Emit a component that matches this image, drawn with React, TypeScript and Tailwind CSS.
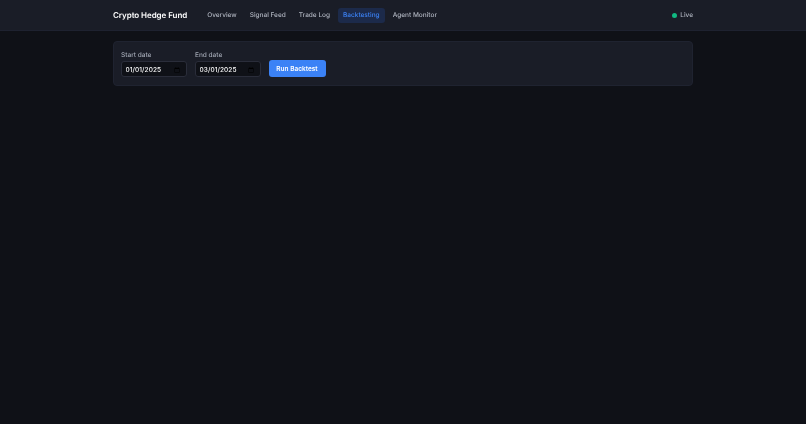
export default function App() {
  const links = ["Overview", "Signal Feed", "Trade Log", "Backtesting", "Agent Monitor"];
  return (
    <div className="min-h-[424px] bg-[#0f1117] font-['Inter',sans-serif] [text-rendering:geometricPrecision] [filter:blur(0.3px)]">
      <header className="h-[31px] bg-[#1a1d27] border-b border-[#1e2230]">
        <div className="mx-auto flex h-full w-[580px] items-center justify-between">
          <div className="flex items-center gap-[15px]">
            <span className="text-[8px] tracking-[-0.06px] font-semibold text-white">Crypto Hedge Fund</span>
            <nav className="flex items-center gap-[3px]">
              {links.map((l) => (
                <a
                  key={l}
                  className={
                    "rounded-[3px] px-[5px] py-[3px] text-[6.5px] leading-[9px] font-medium " +
                    (l === "Backtesting" ? "bg-[#1c2a4a] text-[#3b82f6]" : "text-[#b0b5c0]")
                  }
                >
                  {l}
                </a>
              ))}
            </nav>
          </div>
          <div className="flex items-center gap-[3px]">
            <span className="h-[5px] w-[5px] rounded-full bg-[#10b981]" />
            <span className="pt-[1px] text-[6.5px] font-medium text-[#b0b5c0]">Live</span>
          </div>
        </div>
      </header>
      <main className="mx-auto w-[580px] pt-[10px]">
        <div className="flex items-end gap-[8px] rounded-[4px] border border-[#1f2330] bg-[#1a1d27] px-[7px] pt-[8px] pb-[8px]">
          {[
            ["Start date", "2025-01-01"],
            ["End date", "2025-03-01"],
          ].map(([label, value]) => (
            <label key={label} className="flex flex-col gap-[1px]">
              <span className="text-[6.5px] leading-[10px] font-medium text-[#a3a9b5]">{label}</span>
              <input
                type="date"
                defaultValue={value}
                className="h-[16px] w-[66px] rounded-[3px] border border-[#2a2d3a] bg-[#0f1117] pl-[3.5px] pr-[4px] pt-[3px] text-[6.5px] font-medium tracking-[0.08px] text-white outline-none [&::-webkit-datetime-edit-month-field]:p-0 [&::-webkit-datetime-edit-day-field]:p-0 [&::-webkit-datetime-edit-year-field]:p-0"
              />
            </label>
          ))}
          <button className="-ml-[0.5px] h-[17px] w-[57px] rounded-[3px] bg-[#3b82f6] pt-[3px] text-[6.5px] font-semibold text-white">
            Run Backtest
          </button>
        </div>
      </main>
    </div>
  );
}
